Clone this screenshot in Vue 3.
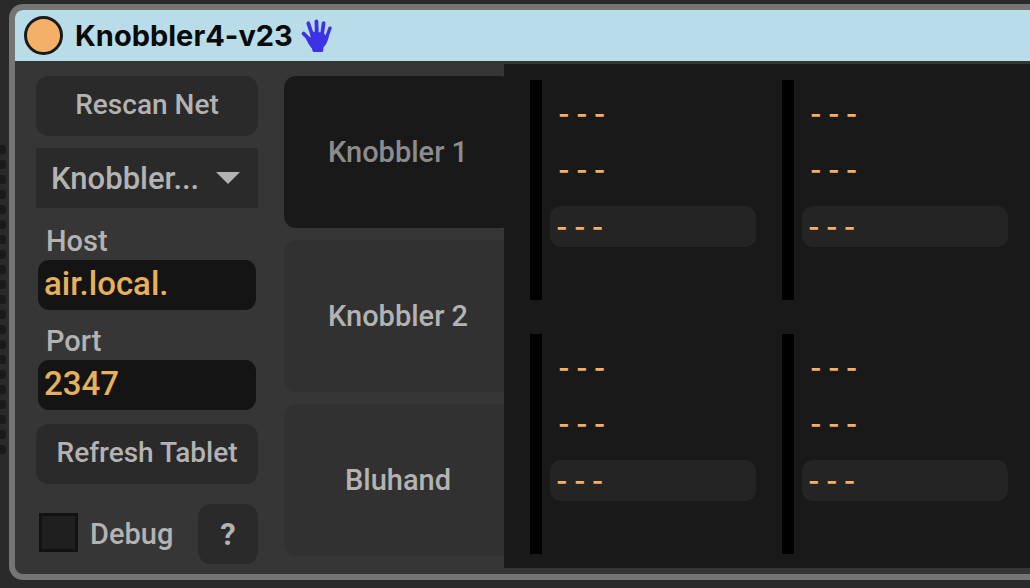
<script setup>
import { ref } from 'vue'

const tabs = ['Knobbler 1', 'Knobbler 2', 'Bluhand']
const activeTab = ref(0)
const device = ref('Knobbler...')
const host = ref('air.local.')
const port = ref('2347')
const debug = ref(false)
const slots = ref([1, 2, 3, 4].map((id) => ({ id, track: '- - -', device: '- - -', param: '- - -' })))
</script>

<template>
  <div class="stage">
    <svg class="grip" width="9" height="315" aria-hidden="true">
      <rect v-for="n in 21" :key="n" x="-3" :y="(n - 1) * 15 + 1" width="9" height="9" rx="3.5" />
    </svg>
    <main class="device">
      <header class="titlebar">
        <button class="power" type="button" aria-label="Device on"></button>
        <h1>Knobbler4-v23</h1>
        <svg class="hand" viewBox="0 0 32 34" width="32" height="34" aria-hidden="true">
          <g fill="none" stroke="#3d33e6" stroke-linecap="round">
            <path d="M2.6 14.6 L10 22" stroke-width="3.8" />
            <path d="M7.3 4.3 L11.6 17" stroke-width="3.8" />
            <path d="M15.4 2.4 L15.9 16" stroke-width="3.8" />
            <path d="M22.6 4.2 L20.8 17" stroke-width="3.8" />
            <path d="M29 9.2 L25 20" stroke-width="3.4" />
          </g>
          <path d="M9 14 L13.8 12.6 L18 13.2 L22.6 13.4 L24.6 16.4 L28 15.4 C27.4 21 25.4 25.4 22.4 28.4 L22.2 32 Q22 33 20.6 33 H12.8 Q11.6 33 11.4 31.6 L11 29.4 C8.4 26.6 6.4 23 4.6 19 L8 17.4 L10 18.6 Z" fill="#3d33e6" />
        </svg>
      </header>

      <div class="body">
        <section class="controls">
          <button class="btn" type="button">Rescan Net</button>
          <div class="picker">
            <select v-model="device" aria-label="Tablet">
              <option>Knobbler...</option>
            </select>
            <svg width="24" height="12" viewBox="0 0 24 12" aria-hidden="true"><path d="M0 0H24L12 12Z" fill="#b3b3b3" /></svg>
          </div>
          <label for="host">Host</label>
          <input id="host" v-model="host" class="field" type="text" />
          <label for="port">Port</label>
          <input id="port" v-model="port" class="field" type="text" />
          <button class="btn refresh" type="button">Refresh Tablet</button>
          <div class="footer">
            <input id="debug" v-model="debug" type="checkbox" />
            <label for="debug">Debug</label>
            <button class="btn help" type="button">?</button>
          </div>
        </section>

        <nav class="tabs">
          <button
            v-for="(tab, i) in tabs"
            :key="tab"
            type="button"
            :class="{ active: i === activeTab }"
            @click="activeTab = i"
          >{{ tab }}</button>
        </nav>

        <section class="panel">
          <article v-for="slot in slots" :key="slot.id" class="slot">
            <div class="bar"></div>
            <div class="lines">
              <p>{{ slot.track }}</p>
              <p>{{ slot.device }}</p>
              <input v-model="slot.param" type="text" aria-label="Parameter" />
            </div>
          </article>
        </section>
      </div>
    </main>
  </div>
</template>

<style>
body {
  margin: 0;
  background: #2a2a2a;
}
</style>

<style scoped>
* {
  box-sizing: border-box;
}

.stage {
  display: flex;
  min-height: 100vh;
  padding: 4px 0 8px;
  overflow: hidden;
  background: #2a2a2a;
  color: #b3b3b3;
  font-family: Roboto, "Liberation Sans", sans-serif;
  font-size: 29px;
  font-weight: 500;
}

button,
input,
select {
  margin: 0;
  border: 0;
  font: inherit;
  color: inherit;
}

.grip {
  flex: none;
  margin-top: 140px;
  fill: #1a1a1a;
}

.device {
  display: flex;
  flex: 1;
  flex-direction: column;
  min-width: 0;
  border: 6px solid #757575;
  border-right: 0;
  border-radius: 14px 0 0 14px;
  background: #363636;
}

.titlebar {
  display: flex;
  align-items: center;
  height: 51px;
  padding-left: 9px;
  border-radius: 8px 0 0 0;
  background: #b8dce8;
}

.power {
  width: 39px;
  height: 39px;
  padding: 0;
  border: 3px solid #1a1a1a;
  border-radius: 50%;
  background: #f4b066;
}

h1 {
  margin: 0 8px 0 12px;
  color: #0a0a0a;
  font-family: Inter, "Liberation Sans", sans-serif;
  font-size: 29px;
  font-weight: 700;
  line-height: 36px;
}

.body {
  display: flex;
  flex: 1;
  padding-left: 21px;
}

.controls {
  display: flex;
  flex: none;
  flex-direction: column;
  width: 222px;
  padding: 15px 0 10px;
}

.btn {
  height: 60px;
  padding: 0 0 4px;
  border-radius: 13px;
  background: #2a2a2a;
  font-size: 28px;
}

.picker {
  display: grid;
  align-items: center;
  height: 60px;
  margin: 12px 0 2px;
  background: #2a2a2a;
}

.picker select,
.picker svg {
  grid-area: 1 / 1;
}

.picker select {
  width: 100%;
  height: 60px;
  padding: 0 50px 0 15px;
  appearance: none;
  background: transparent;
  font-size: 31px;
}

.picker svg {
  justify-self: end;
  margin-right: 18px;
  pointer-events: none;
}

.controls > label {
  height: 50px;
  padding: 12px 0 0 10px;
  line-height: 38px;
}

.field {
  height: 50px;
  margin: 0 2px;
  padding: 0 6px 4px;
  border-radius: 11px;
  background: #141414;
  color: #e6b05c;
  font-size: 33px;
}

.refresh {
  margin-top: 14px;
}

.footer {
  display: flex;
  align-items: center;
  margin-top: 20px;
  padding-left: 3px;
}

.footer input {
  width: 39px;
  height: 39px;
  margin-bottom: 4px;
  border: 3px solid #121212;
  appearance: none;
  background: #1f1f1f;
}

.footer input:checked {
  background: #f4b066;
}

.footer label {
  margin-left: 12px;
}

.help {
  width: 60px;
  margin-left: auto;
  padding: 0;
  font-size: 31px;
  font-weight: 700;
}

.tabs {
  display: flex;
  flex: none;
  flex-direction: column;
  gap: 12px;
  width: 220px;
  margin-left: 26px;
  padding: 15px 0 18px;
}

.tabs button {
  flex: 1;
  width: 228px;
  padding: 0;
  border-radius: 12px;
  background: #313131;
}

.tabs .active {
  background: #191919;
  color: #8c8c8c;
}

.panel {
  position: relative;
  display: grid;
  flex: 1;
  grid-template-columns: repeat(2, 1fr);
  gap: 34px 26px;
  margin: 3px 0 6px;
  padding: 16px 22px 14px 26px;
  background: #191919;
}

.slot {
  display: flex;
  gap: 8px;
  min-width: 0;
}

.bar {
  flex: none;
  width: 12px;
  background: #000;
}

.lines {
  display: flex;
  flex: 1;
  flex-direction: column;
  gap: 15px;
  min-width: 0;
  padding-top: 14px;
  color: #f4b066;
  font-family: Inter, "Liberation Sans", sans-serif;
  font-size: 25px;
  font-weight: 600;
}

.lines p {
  margin: 0;
  padding-left: 8px;
  line-height: 41px;
}

.lines input {
  width: 100%;
  height: 41px;
  padding: 0 6px;
  border-radius: 11px;
  background: #242424;
}
</style>
